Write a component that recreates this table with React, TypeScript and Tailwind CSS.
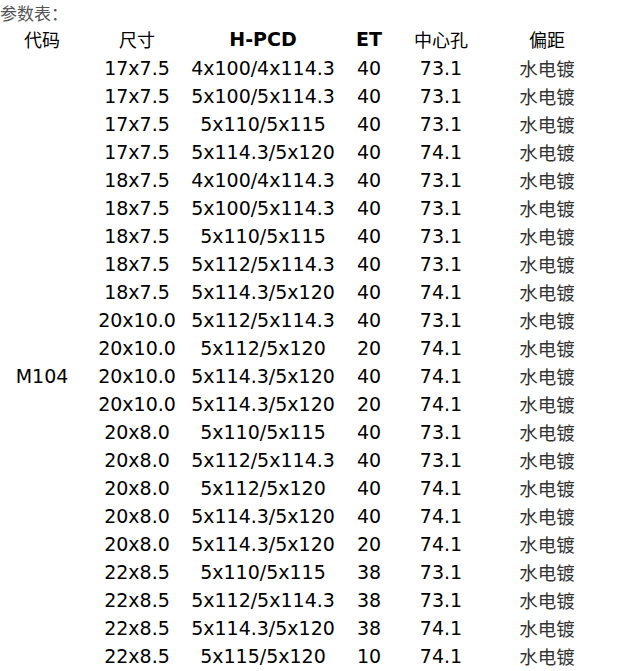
const rows: [string, string, string, string, string][] = [
  ['17x7.5', '4x100/4x114.3', '40', '73.1', '水电镀'],
  ['17x7.5', '5x100/5x114.3', '40', '73.1', '水电镀'],
  ['17x7.5', '5x110/5x115', '40', '73.1', '水电镀'],
  ['17x7.5', '5x114.3/5x120', '40', '74.1', '水电镀'],
  ['18x7.5', '4x100/4x114.3', '40', '73.1', '水电镀'],
  ['18x7.5', '5x100/5x114.3', '40', '73.1', '水电镀'],
  ['18x7.5', '5x110/5x115', '40', '73.1', '水电镀'],
  ['18x7.5', '5x112/5x114.3', '40', '73.1', '水电镀'],
  ['18x7.5', '5x114.3/5x120', '40', '74.1', '水电镀'],
  ['20x10.0', '5x112/5x114.3', '40', '73.1', '水电镀'],
  ['20x10.0', '5x112/5x120', '20', '74.1', '水电镀'],
  ['20x10.0', '5x114.3/5x120', '40', '74.1', '水电镀'],
  ['20x10.0', '5x114.3/5x120', '20', '74.1', '水电镀'],
  ['20x8.0', '5x110/5x115', '40', '73.1', '水电镀'],
  ['20x8.0', '5x112/5x114.3', '40', '73.1', '水电镀'],
  ['20x8.0', '5x112/5x120', '40', '74.1', '水电镀'],
  ['20x8.0', '5x114.3/5x120', '40', '74.1', '水电镀'],
  ['20x8.0', '5x114.3/5x120', '20', '74.1', '水电镀'],
  ['22x8.5', '5x110/5x115', '38', '73.1', '水电镀'],
  ['22x8.5', '5x112/5x114.3', '38', '73.1', '水电镀'],
  ['22x8.5', '5x114.3/5x120', '38', '74.1', '水电镀'],
  ['22x8.5', '5x115/5x120', '10', '74.1', '水电镀'],
  ['22x8.5', '5x120/5x127', '10', '74.1', '水电镀'],
]

export default function App() {
  return (
    <div className="bg-white text-black font-['DejaVu_Sans','Noto_Sans_CJK_SC',sans-serif]">
      <div className="h-[25px] leading-[26px] text-[17px] text-[#555] font-['Noto_Sans_CJK_SC',sans-serif]">参数表：</div>
      <table className="border-collapse text-[19px] table-fixed w-[614px]">
        <colgroup>
          <col className="w-[84px]" />
          <col className="w-[106px]" />
          <col className="w-[146px]" />
          <col className="w-[66px]" />
          <col className="w-[78px]" />
          <col className="w-[134px]" />
        </colgroup>
        <thead>
          <tr className="h-[28px]">
            <th className="p-0 text-center text-[18px] font-normal font-['Noto_Sans_CJK_SC',sans-serif]">代码</th>
            <th className="p-0 text-center text-[18px] font-normal font-['Noto_Sans_CJK_SC',sans-serif]">尺寸</th>
            <th className="p-0 text-center font-bold">H-PCD</th>
            <th className="p-0 text-center font-bold">ET</th>
            <th className="p-0 text-center text-[18px] font-normal font-['Noto_Sans_CJK_SC',sans-serif]">中心孔</th>
            <th className="p-0 text-center text-[18px] font-normal font-['Noto_Sans_CJK_SC',sans-serif]">偏距</th>
          </tr>
        </thead>
        <tbody>
          {rows.map((r, i) => (
            <tr key={i} className="h-[28px] leading-[28px]">
              {i === 0 && (
                <td rowSpan={rows.length} className="p-0 text-center align-middle">
                  M104
                </td>
              )}
              <td className="p-0 text-center">{r[0]}</td>
              <td className="p-0 text-center">{r[1]}</td>
              <td className="p-0 text-center">{r[2]}</td>
              <td className="p-0 text-center">{r[3]}</td>
              <td className="p-0 text-center text-[18.5px] text-[#333] font-['Noto_Sans_CJK_SC',sans-serif]">{r[4]}</td>
            </tr>
          ))}
        </tbody>
      </table>
    </div>
  )
}
